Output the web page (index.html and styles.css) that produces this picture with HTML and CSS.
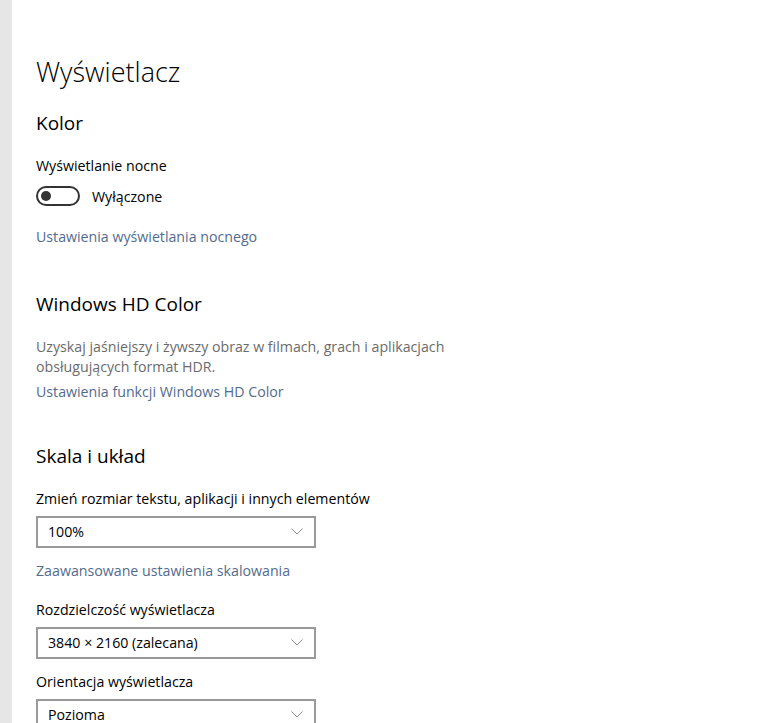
FILE: index.html
```html
<!DOCTYPE html>
<html lang="pl">
  <head>
    <meta charset="UTF-8" />
    <meta name="viewport" content="width=device-width, initial-scale=1.0" />
    <title>Wyświetlacz</title>
    <link rel="stylesheet" href="styles.css">
  </head>
  <body>
    <div class="nav_strip"></div>

    <div class="page">
      <h1 class="page_title">Wyświetlacz</h1>

      <h2 class="section_title" id="kolor">Kolor</h2>
      <p class="label" id="night_label">Wyświetlanie nocne</p>
      <div class="toggle_row">
        <span class="toggle"><span class="knob"></span></span>
        <span class="toggle_text">Wyłączone</span>
      </div>
      <a class="link" id="night_link" href="#">Ustawienia wyświetlania nocnego</a>

      <h2 class="section_title" id="hdr">Windows HD Color</h2>
      <p class="desc">Uzyskaj jaśniejszy i żywszy obraz w filmach, grach i aplikacjach obsługujących format HDR.</p>
      <a class="link" id="hdr_link" href="#">Ustawienia funkcji Windows HD Color</a>

      <h2 class="section_title" id="scale">Skala i układ</h2>
      <p class="label" id="scale_label">Zmień rozmiar tekstu, aplikacji i innych elementów</p>
      <div class="combo">
        <span>100%</span>
        <svg class="chevron" width="12" height="7" viewBox="0 0 12 7"><path d="M0.5 0.5 L6 6 L11.5 0.5" fill="none" stroke="#8a8a8a" stroke-width="1"/></svg>
      </div>
      <a class="link" id="scale_link" href="#">Zaawansowane ustawienia skalowania</a>

      <p class="label" id="res_label">Rozdzielczość wyświetlacza</p>
      <div class="combo">
        <span>3840 × 2160 (zalecana)</span>
        <svg class="chevron" width="12" height="7" viewBox="0 0 12 7"><path d="M0.5 0.5 L6 6 L11.5 0.5" fill="none" stroke="#8a8a8a" stroke-width="1"/></svg>
      </div>

      <p class="label" id="orient_label">Orientacja wyświetlacza</p>
      <div class="combo">
        <span>Pozioma</span>
        <svg class="chevron" width="12" height="7" viewBox="0 0 12 7"><path d="M0.5 0.5 L6 6 L11.5 0.5" fill="none" stroke="#8a8a8a" stroke-width="1"/></svg>
      </div>
    </div>
  </body>
</html>
```

FILE: styles.css
```css
body {
  margin: 0;
  padding: 0;
  display: flex;
  min-height: 723px;
  overflow: hidden;
  background: white;
  color: black;
  font-family: "Open Sans", "Noto Sans", sans-serif;
  font-size: 14.2px;
}
.nav_strip {
  width: 12px;
  flex-shrink: 0;
  background-color: #e6e6e6;
}
.page {
  display: flex;
  flex-direction: column;
  align-items: flex-start;
  padding: 54px 0 0 24px;
  height: 723px;
  box-sizing: border-box;
}
.page_title {
  margin: 0;
  font-size: 27px;
  line-height: 36px;
  font-weight: 300;
}
.section_title {
  margin: 0;
  font-size: 19px;
  line-height: 28px;
  font-weight: 400;
}
.label,
.desc {
  margin: 0;
  line-height: 20px;
}
.desc {
  width: 420px;
  color: #6b6b6b;
}
.link {
  line-height: 20px;
  color: #536b8e;
  text-decoration: none;
}
#kolor { margin-top: 19px; }
#night_label { margin-top: 19px; }
.toggle_row {
  display: flex;
  align-items: center;
  margin-top: 10px;
  height: 20px;
}
.toggle {
  width: 44px;
  height: 20px;
  box-sizing: border-box;
  border: 2px solid #333;
  border-radius: 10px;
  display: flex;
  align-items: center;
  padding-left: 3px;
}
.knob {
  width: 10px;
  height: 10px;
  border-radius: 50%;
  background-color: #333;
}
.toggle_text {
  margin-left: 12px;
}
#night_link { margin-top: 21px; }
#hdr { margin-top: 43px; }
.desc { margin-top: 19px; }
#hdr_link { margin-top: 5px; }
#scale { margin-top: 40px; }
#scale_label { margin-top: 19px; }
.combo {
  width: 280px;
  height: 32px;
  box-sizing: border-box;
  border: 2px solid #999;
  margin-top: 7px;
  display: flex;
  align-items: center;
  justify-content: space-between;
  padding: 0 11px 1px 10px;
  flex-shrink: 0;
}
#scale_link { margin-top: 13px; }
#res_label { margin-top: 19px; }
#orient_label { margin-top: 13px; }
```
